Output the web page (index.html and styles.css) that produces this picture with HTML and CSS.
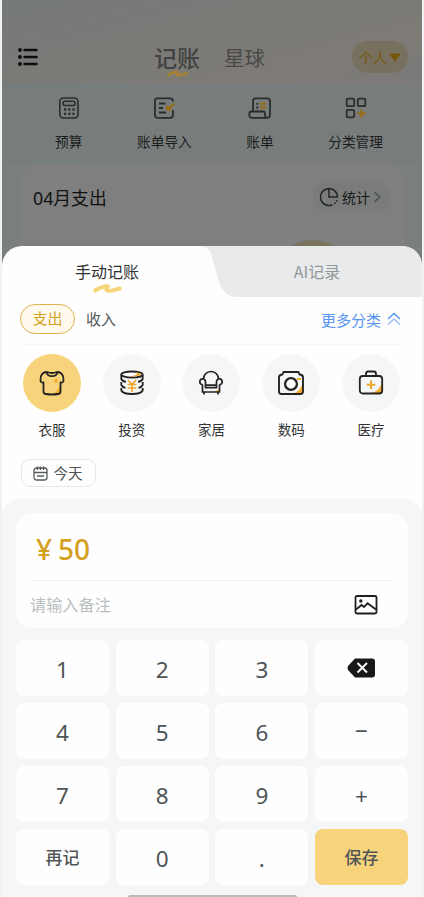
FILE: index.html
```html
<!DOCTYPE html>
<html lang="zh-CN">
<head>
<meta charset="utf-8">
<title>记账</title>
<link rel="stylesheet" href="styles.css">
</head>
<body>
<div class="phone">
  <div class="backdrop">
    <header class="top">
      <svg class="menu" width="20" height="18" viewBox="0 0 20 18"><g fill="#0c0d0d"><circle cx="2" cy="2" r="1.9"/><circle cx="2" cy="9" r="1.9"/><circle cx="2" cy="16" r="1.9"/></g><path d="M6.5 2H18.5M6.5 9H18.5M6.5 16H18.5" stroke="#0c0d0d" stroke-width="2.5" stroke-linecap="round"/></svg>
      <div class="title">记账<svg class="swash" width="21" height="7" viewBox="0 0 29 9"><path d="M2 6.500C6 4 12 2 14.500 2.500C16 3 12 5.500 14 6.500C17 8 22 5.500 27 4.500" fill="none" stroke="#a48334" stroke-width="4" stroke-linecap="round"/></svg></div>
      <div class="planet">星球</div>
      <div class="person">个人<svg width="12" height="9" viewBox="0 0 12 9"><path d="M1 1H11L6 8Z" fill="#755707" stroke="#755707" stroke-linejoin="round"/></svg></div>
    </header>
    <nav class="tools">
      <div class="tool"><svg width="24" height="24" viewBox="0 0 24 24" fill="none" stroke="#2a2d2e" stroke-width="1.600"><rect x="2.800" y="2" width="18.200" height="20" rx="3.500"/><rect x="6.300" y="5.300" width="11.600" height="4.200" rx="1"/><path d="M7 13.500H18M7 17.800H18" stroke-width="2.300" stroke-dasharray="2.200 2"/></svg><span>预算</span></div>
      <div class="tool"><svg width="24" height="24" viewBox="0 0 24 24" fill="none" stroke="#2a2d2e" stroke-width="1.800"><path d="M21 5.500V5Q21 2.300 18 2.300H5.500Q3 2.300 3 5V19Q3 21.800 6 21.800H18Q21 21.800 21 19V14"/><path d="M7 7.500H13.500M7 12H11M7 16.500H14"/><path d="M22.500 7.500L15 13.500M15.300 9.500V13.500H19.500" stroke="#9c6c0c" stroke-width="2.100"/></svg><span>账单导入</span></div>
      <div class="tool"><svg width="24" height="24" viewBox="0 0 24 24" fill="none" stroke="#2a2d2e" stroke-width="1.800"><path d="M5 15V5Q5 2.300 8 2.300H19Q22 2.300 22 5V19Q22 21.800 19 21.800H4Q1.300 21.800 1.300 19V17.500Q1.300 15.500 3.500 15.500H15.500Q17 15.500 17 17.500V19Q17 21.800 19.500 21.800"/><path d="M8.300 7.800H10.300M8.300 11.500H10.300"/><path d="M12 7.800H18M12 11.500H18" stroke="#9c6c0c" stroke-width="2"/></svg><span>账单</span></div>
      <div class="tool"><svg width="24" height="24" viewBox="0 0 24 24" fill="none" stroke="#2a2d2e" stroke-width="1.800"><rect x="2.700" y="2.700" width="7.500" height="7.500" rx="1.300"/><rect x="13.800" y="2.700" width="7.500" height="7.500" rx="1.300"/><rect x="2.700" y="13.800" width="7.500" height="7.500" rx="1.300"/><path d="M17.500 13.200V22M13.100 17.600H21.900" stroke="#9c6c0c" stroke-width="2"/></svg><span>分类管理</span></div>
    </nav>
    <section class="month">
      <h2>04月支出</h2>
      <div class="stats"><svg width="20" height="20" viewBox="0 0 20 20" fill="none" stroke="#242626" stroke-width="1.500"><path d="M13.500 17.800A8.500 8.500 0 1 1 18.500 10H10V1.500"/><path d="M15.300 16.700L18.500 13" stroke-dasharray="1.700 1.300"/></svg><span>统计</span><svg width="8" height="12" viewBox="0 0 8 12"><path d="M1.500 1L6.500 6L1.500 11" fill="none" stroke="#505353" stroke-width="1.700"/></svg></div>
      <i class="glow"></i>
    </section>
  </div>

  <main class="sheet">
    <div class="tabs">
      <svg class="tab-shape" width="210" height="51" viewBox="0 0 210 51"><path d="M0 0H190Q210 0 210 20V51H21C10 51 5 45 2 36L-6 8Q-9 0 -18 0Z" transform="translate(5 0)" fill="#e8eaeb"/></svg>
      <div class="tab active">手动记账<svg class="swash" width="29" height="9" viewBox="0 0 29 9"><path d="M2.200 6.500C6 4 12 2 14.500 2.300C16 2.800 12 5.500 14 6.500C17 8 22 5.500 26.800 4.500" fill="none" stroke="#f8d478" stroke-width="3.900" stroke-linecap="round"/></svg></div>
      <div class="tab">AI记录</div>
    </div>
    <div class="kinds">
      <span class="pill">支出</span><span class="income">收入</span>
      <span class="more">更多分类<svg width="14" height="14" viewBox="0 0 14 14" fill="none" stroke="#5695f3" stroke-width="1.500"><path d="M1 7L7 1.500L13 7"/><path d="M1 12.500L7 7L13 12.500" opacity=".6"/></svg></span>
    </div>
    <div class="cats">
      <div class="cat on"><div class="disc"><svg width="26" height="26" viewBox="0 0 26 26" fill="none" stroke="#242321" stroke-width="1.800" stroke-linejoin="round"><path d="M21.500 13Q20 21 14 24H21Z" fill="#f2aa24" stroke="none"/><path d="M8 2Q13 4 18 2C22 2 25 5 24.500 10Q24.500 13 21.500 12.500V21.500Q21.500 24 19 24Q13 25 7 24Q4.500 24 4.500 21.500V12.500Q1.500 13 1.500 10C1 5 4 2 8 2ZM7.500 2Q8 6.200 13 6.200T18.500 2"/><circle cx="17" cy="11" r="1.900" fill="#f2aa24" stroke="none"/></svg></div><span>衣服</span></div>
      <div class="cat"><div class="disc"><svg width="26" height="26" viewBox="0 0 26 26" fill="none" stroke="#242321" stroke-width="1.800"><ellipse cx="13" cy="4.500" rx="10.700" ry="3" fill="#fff"/><path d="M10 6.700Q20 7 22.500 4Q20 2 17 2.500Q21 5 10 6.700" fill="#eda82d" stroke="none"/><path d="M2.300 5V9Q3.500 11.500 7 11.800M23.700 5V9Q22.500 11.500 19 11.800M2.300 12V15Q3.500 17.500 6.500 17.800M23.700 12V15Q22.500 17.500 19.500 17.800M2.300 18V20.500Q4 24 13 24T23.700 20.500V18"/><path d="M9 10L13 14.500L17 10M13 14V22M8.500 14.500H17.500M8.500 18H17.500" stroke="#f1a62a" stroke-width="1.700"/></svg></div><span>投资</span></div>
      <div class="cat"><div class="disc"><svg width="26" height="26" viewBox="0 0 26 26" fill="none" stroke="#242321" stroke-width="1.700" stroke-linejoin="round"><path d="M14 22Q21 21 22 17V22Z" fill="#efa829" stroke="none"/><path d="M5.500 9C5.500 5 8.500 1.500 13 1.500S20.500 5 20.500 9M5.500 9Q1.800 8.500 1.800 12Q1.800 14 4.500 15V22H21.500V15Q24.200 14 24.200 12Q24.200 8.500 20.500 9Q18.500 9.500 18.500 12V17.700H7.500V12Q7.500 9.500 5.500 9ZM7.500 15.200H18.500M6 22V24.500M20 22V24.500"/></svg></div><span>家居</span></div>
      <div class="cat"><div class="disc"><svg width="28" height="26" viewBox="0 0 28 26" fill="none" stroke="#242321" stroke-width="1.900" stroke-linejoin="round"><path d="M26 11Q24 22 15 24H26Z" fill="#f0ac2a" stroke="none"/><path d="M6.500 2H21.500L22.500 4.500Q26 4.500 26 7.500V21.500Q26 24 23.500 24H4.500Q2 24 2 21.500V7.500Q2 4.500 5.500 4.500Z"/><circle cx="14" cy="14" r="5.900" fill="#fff" stroke-width="2.300"/><path d="M20 9H24" stroke="#f0ac2a"/></svg></div><span>数码</span></div>
      <div class="cat"><div class="disc"><svg width="26" height="26" viewBox="0 0 26 26" fill="none" stroke="#242321" stroke-width="1.800"><path d="M24 12Q22 21 13 23H24Z" fill="#f0ac2a" stroke="none"/><rect x="1.800" y="6" width="22.400" height="17.500" rx="3"/><path d="M8 6V4Q8 1.500 10 1.500H16Q18 1.500 18 4V6"/><path d="M13 10.500V19M8.800 14.800H17.200" stroke="#f0a72c" stroke-width="2"/></svg></div><span>医疗</span></div>
    </div>
    <div class="date"><svg width="15" height="15" viewBox="0 0 15 15" fill="none" stroke="#575b5c" stroke-width="1.300"><rect x="1" y="2" width="13" height="12" rx="2.500"/><path d="M4.500 .5V4M7.500 .5V4M10.500 .5V4M1 6.500H14M4 10H11"/></svg><span>今天</span></div>

    <section class="entry">
      <div class="card">
        <div class="amount"><span class="yen">¥</span>50</div>
        <div class="note"><span>请输入备注</span><svg width="24" height="20" viewBox="0 0 24 20" fill="none" stroke="#1e1f1f" stroke-width="1.800"><rect x="1.500" y="1" width="21" height="17.500" rx="1.500"/><circle cx="6.800" cy="6" r="1.700" fill="#1e1f1f" stroke="none"/><path d="M2 14.500L7.500 10L10 12L13.500 8.300L22 14.500"/></svg></div>
      </div>
      <div class="keys">
        <b>1</b><b>2</b><b>3</b><b class="op"><svg class="del" width="28" height="20" viewBox="0 0 28 20"><path d="M8 .5H25Q28 .5 28 3.500V16.500Q28 19.500 25 19.500H8L1 12Q0 10 1 8Z" fill="#171818"/><path d="M10.500 5L20 14.500M20 5L10.500 14.500" stroke="#fff" stroke-width="1.900"/></svg></b>
        <b>4</b><b>5</b><b>6</b><b class="op">−</b>
        <b>7</b><b>8</b><b>9</b><b>+</b>
        <b class="word">再记</b><b>0</b><b>.</b><b class="word save">保存</b>
      </div>
      <i class="home"></i>
    </section>
  </main>
</div>
</body>
</html>
```
FILE: styles.css
```css
* { box-sizing: border-box; }
body { margin: 0; background: #f1f2f3; font-family: "Noto Sans CJK SC", sans-serif; color: #303233; }
svg { display: block; flex: none; }
.phone { width: 420px; height: 897px; margin: 0 2px; display: flex; flex-direction: column; overflow: hidden; background: #7a7e7d; }
.backdrop { height: 246px; flex: none; }
.top { height: 83px; padding: 31px 14px 0 16px; display: flex; align-items: center; background: linear-gradient(165deg, #757979 0%, #7b7a76 50%, #7e7b76 75%, #7b7a7a 100%); }
.title { position: relative; margin-left: 116px; font-size: 23px; font-weight: 500; line-height: 34px; color: #414242; }
.title .swash { position: absolute; left: 13px; bottom: -3px; }
.planet { margin-left: 24px; font-size: 20.5px; color: #484847; }
.person { margin-left: auto; width: 56px; height: 32px; border-radius: 16px; background: #78705e; color: #76590d; font-size: 14px; display: flex; align-items: center; justify-content: center; gap: 2px; }
.tools { height: 81px; display: grid; grid-template-columns: repeat(4, 95.6px); padding: 13px 0 0 19px; background: linear-gradient(90deg, #777d7c, #797c7c); }
.tool { display: flex; flex-direction: column; align-items: center; font-size: 13.7px; line-height: 20px; gap: 11px; color: #1c1e1e; }
.month { position: relative; height: 100px; margin: 0 18px 0 19px; padding: 17px 13px 0 12px; border-radius: 16px; background: #7f7f7f; display: flex; align-items: flex-start; justify-content: space-between; overflow: hidden; }
.month h2 { margin: 0; font-family: "Noto Sans", "Noto Sans CJK SC", sans-serif; font-size: 17.8px; line-height: 34px; font-weight: 400; color: #111; }
.stats { width: 78px; height: 31px; border-radius: 16px; background: #7a7c7c; display: flex; align-items: center; font-size: 14px; color: #171818; padding-left: 6px; gap: 3px; }
.glow { position: absolute; left: 250px; top: 76px; width: 84px; height: 84px; border-radius: 50%; background: #79725d; }
.sheet { position: relative; flex: 1; background: #fefefe; border-radius: 20px 20px 0 0; overflow: hidden; display: flex; flex-direction: column; }
.tabs { position: relative; height: 51px; flex: none; display: grid; grid-template-columns: 1fr 1fr; }
.tab-shape { position: absolute; right: 0; top: 0; overflow: visible; }
.tab { position: relative; text-align: center; font-size: 16px; line-height: 51px; color: #92989a; }
.tab.active { color: #303233; }
.tab.active .swash { position: absolute; left: 91px; top: 38px; }
.kinds { height: 48px; flex: none; margin: 0 21px 0 18px; display: flex; align-items: center; border-bottom: 1px solid #f6f7f7; font-size: 15px; padding-bottom: 3px; }
.pill { width: 55px; height: 30px; border: 1.6px solid #deb24d; border-radius: 15px; background: #fffaed; color: #d59f20; text-align: center; line-height: 26px; }
.income { margin-left: 11px; line-height: 24px; color: #555a5b; }
.more { margin-left: auto; display: flex; align-items: center; gap: 6px; color: #5695f3; }
.cats { flex: none; margin-top: 9px; padding-left: 10px; display: grid; grid-template-columns: repeat(5, 79.8px); }
.cat { display: flex; flex-direction: column; align-items: center; gap: 7px; font-size: 13.5px; line-height: 20px; }
.disc { width: 58px; height: 58px; border-radius: 50%; background: #f4f6f8; display: grid; place-items: center; }
.on .disc { background: #f7d37c; }
.date { flex: none; margin: 20px 0 0 19px; width: 75px; height: 28px; border: 1.5px solid #e4e8eb; border-radius: 9px; display: flex; align-items: center; padding-left: 11px; gap: 5.5px; font-size: 14.5px; line-height: 22px; color: #505556; }
.entry { flex: 1; margin-top: 12px; border-radius: 18px 18px 0 0; background: #f4f6f8; padding: 14px 14px 0; display: flex; flex-direction: column; }
.card { height: 115px; flex: none; border-radius: 16px; background: #fefefe; padding: 0 14px; }
.amount { height: 68px; border-bottom: 1px solid #eff1f3; display: flex; align-items: center; gap: 6px; padding: 4px 0 0 6px; font: 500 28px "Noto Sans", sans-serif; color: #d5a01e; }
.note { height: 47px; display: flex; align-items: center; justify-content: space-between; padding: 0 16px 0 0; font-size: 16.2px; color: #b9bebf; }
.note span { padding-bottom: 2px; }
.keys { margin-top: 12px; display: grid; grid-template-columns: repeat(4, 1fr); grid-auto-rows: 56px; gap: 7px 6.6px; }
.keys b { display: grid; place-items: center; padding-top: 3px; border-radius: 8px; background: #fefefe; font-family: "Noto Sans", "Noto Sans CJK SC", sans-serif; font-weight: 400; font-size: 22.5px; line-height: 32px; color: #505556; }
.keys .op { padding-top: 0; }
.keys .word { padding-top: 1px; font-size: 17px; font-weight: 500; }
.keys .save { background: #f7d37c; }
.home { width: 169px; height: 4px; margin: auto auto -2px; background: #b9bbbb; border-radius: 2px; }
```
